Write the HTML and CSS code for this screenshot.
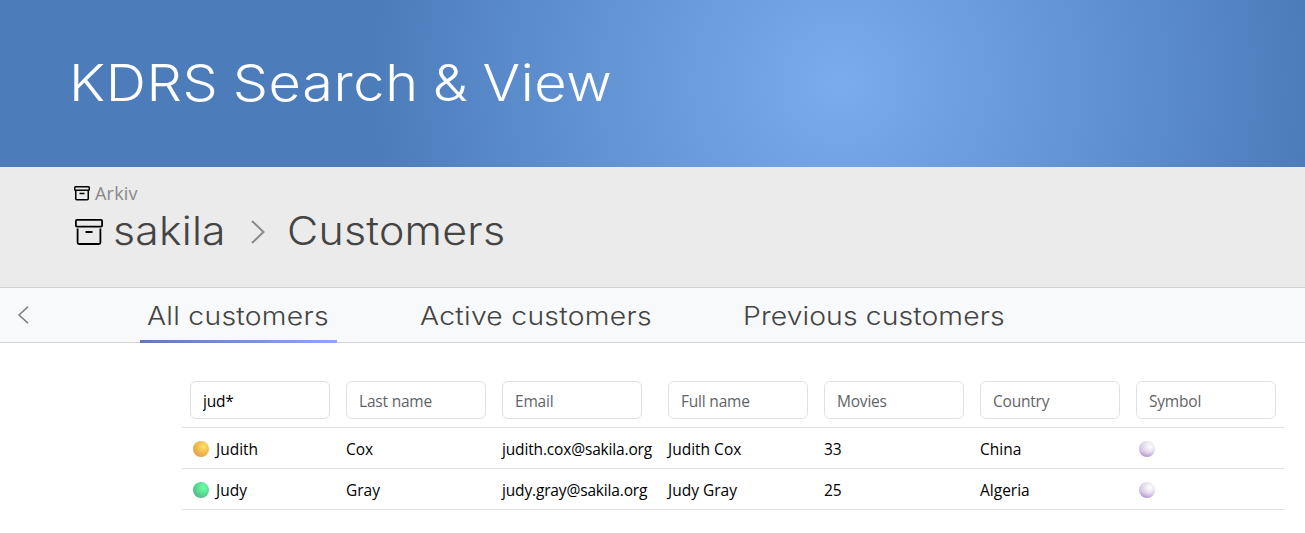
FILE: index.html
```html
<!DOCTYPE html>
<html lang="en">
<head>
<meta charset="utf-8">
<title>KDRS Search &amp; View</title>
<link rel="stylesheet" href="styles.css">
</head>
<body>
<header class="banner"><h1 class="brand">KDRS Search &amp; View</h1></header>
<section class="heading">
  <div class="root">
    <svg class="root-icon" viewBox="0 0 16 15"><rect x=".75" y=".75" width="14.500" height="3.500" rx=".8"/><path d="M1.750 5v7.700q0 1 1 1h10.500q1 0 1-1V5M5.500 7.500h5"/></svg>
    <span>Arkiv</span>
  </div>
  <div class="crumbs">
    <svg class="base-icon" viewBox="0 0 28 26"><rect x=".9" y=".9" width="26.200" height="6.700" rx="1"/><path d="M2.600 9.500v14q0 1.500 1.500 1.500h19.800q1.500 0 1.500-1.500v-14M10.500 13h7"/></svg>
    <span class="base">sakila</span>
    <svg class="sep" viewBox="0 0 14 24"><path d="m1 1 11.500 11L1 23"/></svg>
    <span class="view">Customers</span>
  </div>
</section>
<nav class="tabs">
  <svg class="back" viewBox="0 0 11 18"><path d="M10 .7 1 9l9 8.300"/></svg>
  <a class="tab all active"><span>All customers</span></a>
  <a class="tab current"><span>Active customers</span></a>
  <a class="tab previous"><span>Previous customers</span></a>
</nav>
<main class="grid">
  <div class="row filters">
    <div><input value="jud*"></div>
    <div><input placeholder="Last name"></div>
    <div><input placeholder="Email"></div>
    <div><input placeholder="Full name"></div>
    <div><input placeholder="Movies"></div>
    <div><input placeholder="Country"></div>
    <div><input placeholder="Symbol"></div>
  </div>
  <div class="row">
    <div><i class="ball gold"></i>Judith</div><div>Cox</div><div class="mail">judith.cox@sakila.org</div><div>Judith Cox</div><div>33</div><div>China</div><div><i class="ball pearl"></i></div>
  </div>
  <div class="row">
    <div><i class="ball green"></i>Judy</div><div>Gray</div><div class="mail">judy.gray@sakila.org</div><div>Judy Gray</div><div>25</div><div>Algeria</div><div><i class="ball pearl"></i></div>
  </div>
</main>
</body>
</html>
```

FILE: styles.css
```css
* { box-sizing: border-box; }
body { margin: 0; background: #fff; color: #000; font-family: "Open Sans", sans-serif; overflow: hidden; }
svg { fill: none; flex: none; }

.banner {
  height: 167px;
  padding: 51px 0 0 69px;
  background: radial-gradient(circle 470px at 840px 83px, #7aacee, #4c7cba);
}
.brand { width: 500px; margin: 0; font: 320 50.5px/64px Inter, sans-serif; letter-spacing: .6px; word-spacing: -2px; color: #fff; white-space: nowrap; transform: scaleX(1.105); transform-origin: 0 50%; }

.heading { height: 120px; padding: 14px 0 0 74px; background: #ebebeb; }
.root { display: flex; align-items: center; height: 24px; gap: 5px; font-size: 18px; letter-spacing: .2px; color: #888; }
.root-icon { width: 16px; height: 15px; stroke: #000; stroke-width: 1.5; }
.crumbs { display: flex; align-items: center; height: 52px; font: 320 39px/52px Inter, sans-serif; letter-spacing: .2px; color: #444; }
.base-icon { width: 28px; height: 26px; margin: 2px 0 0 1px; stroke: #000; stroke-width: 1.8; }
.base { width: 138px; margin-left: 10px; transform: scaleX(1.095); transform-origin: 0 50%; }
.sep { width: 14px; height: 24px; margin: 2px 22px 0 0; stroke: #888; stroke-width: 2; }
.view { transform: scaleX(1.1); transform-origin: 0 50%; }

.tabs { display: flex; height: 56px; background: #f8f9fb; border-top: 1px solid #d0d1d3; border-bottom: 1px solid #d0d1d3; }
.back { width: 11px; height: 18px; margin: 18px 111px 0 18px; stroke: #777; stroke-width: 1.5; }
.tab { height: 55px; margin-right: 76px; padding-left: 7px; font: 320 25.500px/55px Inter, sans-serif; letter-spacing: .25px; color: #444; white-space: nowrap; }
.tab span { display: inline-block; transform: scaleX(1.11); transform-origin: 0 50%; }
.all { width: 197px; }
.current { width: 247px; }
.previous { width: 277px; letter-spacing: .1px; }
.active { border-bottom: 3px solid; border-image: linear-gradient(90deg, #6478b8, #8fa5fa) 1; }

.grid { width: 1102px; margin: 30px 0 0 182px; font-size: 15.500px; letter-spacing: 0; }
.row { display: grid; grid-template-columns: 156px 156px 166px repeat(4, 156px); height: 41px; border-bottom: 1px solid #dee2e6; }
.row > div { display: flex; align-items: center; padding: 1px 8px 0; white-space: nowrap; }
.filters { height: 55px; }
.row.filters > div { padding-top: 0; }
.row > .mail { letter-spacing: -.16px; }
input { width: 140px; height: 38px; padding: 1px 12px 0; border: 1px solid #dee2e6; border-radius: 6px; background: #fff; color: #000; font: 15.500px "Open Sans", sans-serif; letter-spacing: -.2px; }
input::placeholder { color: #5f6468; opacity: 1; }
.ball { width: 16px; height: 16px; margin: 1px 7px 0 3px; border-radius: 50%; }
.gold { background: radial-gradient(circle at 66% 34%, #ffe067, #f2b950 45%, #cf8e4c 100%); }
.green { background: radial-gradient(circle at 66% 34%, #70ffa4, #5adc93 45%, #4c988c 100%); }
.pearl { background: radial-gradient(circle at 68% 36%, #fffe 5%, #fff0 75%), linear-gradient(#d2cfd8, #cdbae0 60%, #b18fd0); }
```
